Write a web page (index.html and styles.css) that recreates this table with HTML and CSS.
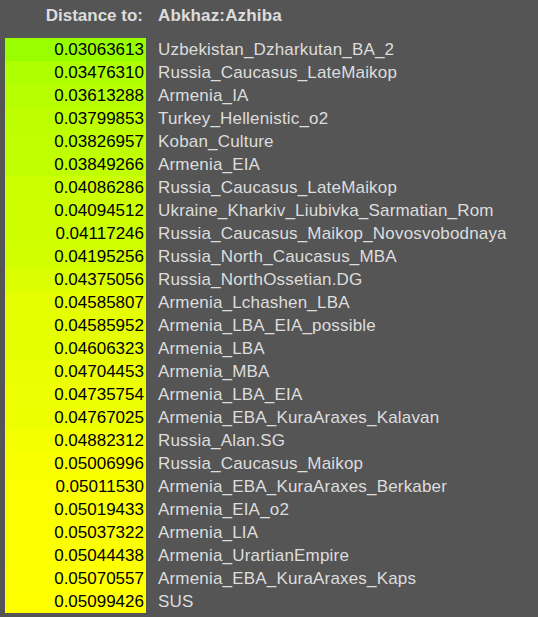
FILE: index.html
```html
<!DOCTYPE html>
<html>
<head>
<meta charset="utf-8">
<link rel="stylesheet" href="styles.css">
</head>
<body>
<table class="dist">
<thead>
<tr><th class="lbl">Distance to:</th><th class="tgt">Abkhaz:Azhiba</th></tr>
</thead>
<tbody>
<tr><td class="val" style="background:rgb(153,255,0)">0.03063613</td><td class="name">Uzbekistan_Dzharkutan_BA_2</td></tr>
<tr><td class="val" style="background:rgb(174,255,0)">0.03476310</td><td class="name">Russia_Caucasus_LateMaikop</td></tr>
<tr><td class="val" style="background:rgb(181,255,0)">0.03613288</td><td class="name">Armenia_IA</td></tr>
<tr><td class="val" style="background:rgb(190,255,0)">0.03799853</td><td class="name">Turkey_Hellenistic_o2</td></tr>
<tr><td class="val" style="background:rgb(191,255,0)">0.03826957</td><td class="name">Koban_Culture</td></tr>
<tr><td class="val" style="background:rgb(192,255,0)">0.03849266</td><td class="name">Armenia_EIA</td></tr>
<tr><td class="val" style="background:rgb(204,255,0)">0.04086286</td><td class="name">Russia_Caucasus_LateMaikop</td></tr>
<tr><td class="val" style="background:rgb(205,255,0)">0.04094512</td><td class="name">Ukraine_Kharkiv_Liubivka_Sarmatian_Rom</td></tr>
<tr><td class="val" style="background:rgb(206,255,0)">0.04117246</td><td class="name">Russia_Caucasus_Maikop_Novosvobodnaya</td></tr>
<tr><td class="val" style="background:rgb(210,255,0)">0.04195256</td><td class="name">Russia_North_Caucasus_MBA</td></tr>
<tr><td class="val" style="background:rgb(219,255,0)">0.04375056</td><td class="name">Russia_NorthOssetian.DG</td></tr>
<tr><td class="val" style="background:rgb(229,255,0)">0.04585807</td><td class="name">Armenia_Lchashen_LBA</td></tr>
<tr><td class="val" style="background:rgb(229,255,0)">0.04585952</td><td class="name">Armenia_LBA_EIA_possible</td></tr>
<tr><td class="val" style="background:rgb(230,255,0)">0.04606323</td><td class="name">Armenia_LBA</td></tr>
<tr><td class="val" style="background:rgb(235,255,0)">0.04704453</td><td class="name">Armenia_MBA</td></tr>
<tr><td class="val" style="background:rgb(237,255,0)">0.04735754</td><td class="name">Armenia_LBA_EIA</td></tr>
<tr><td class="val" style="background:rgb(238,255,0)">0.04767025</td><td class="name">Armenia_EBA_KuraAraxes_Kalavan</td></tr>
<tr><td class="val" style="background:rgb(244,255,0)">0.04882312</td><td class="name">Russia_Alan.SG</td></tr>
<tr><td class="val" style="background:rgb(250,255,0)">0.05006996</td><td class="name">Russia_Caucasus_Maikop</td></tr>
<tr><td class="val" style="background:rgb(251,255,0)">0.05011530</td><td class="name">Armenia_EBA_KuraAraxes_Berkaber</td></tr>
<tr><td class="val" style="background:rgb(251,255,0)">0.05019433</td><td class="name">Armenia_EIA_o2</td></tr>
<tr><td class="val" style="background:rgb(252,255,0)">0.05037322</td><td class="name">Armenia_LIA</td></tr>
<tr><td class="val" style="background:rgb(252,255,0)">0.05044438</td><td class="name">Armenia_UrartianEmpire</td></tr>
<tr><td class="val" style="background:rgb(254,255,0)">0.05070557</td><td class="name">Armenia_EBA_KuraAraxes_Kaps</td></tr>
<tr><td class="val" style="background:rgb(255,255,0)">0.05099426</td><td class="name">SUS</td></tr>
</tbody>
</table>
</body>
</html>
```
FILE: styles.css
```css
html, body {
  margin: 0;
  padding: 0;
  background: #555555;
}
body {
  font-family: "Liberation Sans", Arial, sans-serif;
  font-size: 17px;
  color: #dddddd;
}
.dist {
  margin: 4px 0 0 5px;
  border-collapse: collapse;
  border-spacing: 0;
}
.dist th {
  font-weight: bold;
  line-height: 23px;
  padding: 0 0 11px 0;
  white-space: nowrap;
}
.dist th.lbl {
  text-align: right;
  padding-right: 3px;
}
.dist th.tgt {
  text-align: left;
  padding-left: 12px;
  letter-spacing: 0.15px;
}
.dist td {
  line-height: 23px;
  height: 23px;
  padding: 0;
  white-space: nowrap;
}
.dist td.val {
  width: 139px;
  text-align: right;
  padding-right: 2px;
  color: #000000;
}
.dist td.name {
  padding-left: 12px;
  letter-spacing: 0.18px;
}
```
